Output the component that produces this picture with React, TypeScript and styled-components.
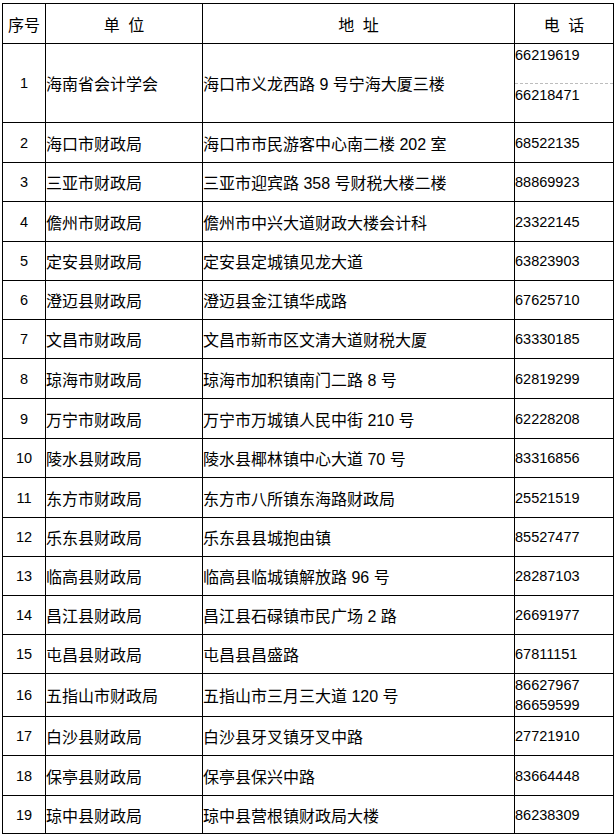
import styled, { createGlobalStyle } from "styled-components";

const GlobalStyle = createGlobalStyle`
    html, body {
        margin: 0;
        padding: 0;
        background: #ffffff;
    }
    body {
        font-family: "Liberation Sans", "Noto Sans CJK SC", sans-serif;
        color: #000000;
    }
`;

interface RowData {
    no: number;
    unit: string;
    address: string;
    phones: string[];
    h: number;
    split?: boolean;
}

const rows: RowData[] = [
    { no: 1, unit: "海南省会计学会", address: "海口市义龙西路 9 号宁海大厦三楼", phones: ["66219619", "66218471"], h: 79, split: true },
    { no: 2, unit: "海口市财政局", address: "海口市市民游客中心南二楼 202 室", phones: ["68522135"], h: 40 },
    { no: 3, unit: "三亚市财政局", address: "三亚市迎宾路 358 号财税大楼二楼", phones: ["88869923"], h: 39 },
    { no: 4, unit: "儋州市财政局", address: "儋州市中兴大道财政大楼会计科", phones: ["23322145"], h: 40 },
    { no: 5, unit: "定安县财政局", address: "定安县定城镇见龙大道", phones: ["63823903"], h: 39 },
    { no: 6, unit: "澄迈县财政局", address: "澄迈县金江镇华成路", phones: ["67625710"], h: 39 },
    { no: 7, unit: "文昌市财政局", address: "文昌市新市区文清大道财税大厦", phones: ["63330185"], h: 39 },
    { no: 8, unit: "琼海市财政局", address: "琼海市加积镇南门二路 8 号", phones: ["62819299"], h: 40 },
    { no: 9, unit: "万宁市财政局", address: "万宁市万城镇人民中街 210 号", phones: ["62228208"], h: 40 },
    { no: 10, unit: "陵水县财政局", address: "陵水县椰林镇中心大道 70 号", phones: ["83316856"], h: 39 },
    { no: 11, unit: "东方市财政局", address: "东方市八所镇东海路财政局", phones: ["25521519"], h: 40 },
    { no: 12, unit: "乐东县财政局", address: "乐东县县城抱由镇", phones: ["85527477"], h: 39 },
    { no: 13, unit: "临高县财政局", address: "临高县临城镇解放路 96 号", phones: ["28287103"], h: 39 },
    { no: 14, unit: "昌江县财政局", address: "昌江县石碌镇市民广场 2 路", phones: ["26691977"], h: 39 },
    { no: 15, unit: "屯昌县财政局", address: "屯昌县昌盛路", phones: ["67811151"], h: 39 },
    { no: 16, unit: "五指山市财政局", address: "五指山市三月三大道 120 号", phones: ["86627967", "86659599"], h: 43 },
    { no: 17, unit: "白沙县财政局", address: "白沙县牙叉镇牙叉中路", phones: ["27721910"], h: 39 },
    { no: 18, unit: "保亭县财政局", address: "保亭县保兴中路", phones: ["83664448"], h: 40 },
    { no: 19, unit: "琼中县财政局", address: "琼中县营根镇财政局大楼", phones: ["86238309"], h: 38 },
];

const StyledTable = styled.div`
    margin: 3px 0 0 2px;
    width: 612px;
    border-top: 1px solid #000;
    border-left: 1px solid #000;
    box-sizing: border-box;
`;

const StyledRow = styled.div<{ $h: number }>`
    display: grid;
    grid-template-columns: 43px 157px 312px 99px;
    height: ${p => p.$h}px;
`;

const StyledCell = styled.div<{ $center?: boolean; $num?: boolean }>`
    display: flex;
    align-items: center;
    justify-content: ${p => (p.$center ? "center" : "flex-start")};
    border-right: 1px solid #000;
    border-bottom: 1px solid #000;
    box-sizing: border-box;
    font-size: ${p => (p.$num ? "14.5px" : "16px")};
    white-space: nowrap;
    overflow: hidden;
`;

const StyledHeadText = styled.span`
    font-size: 16px;
    word-spacing: 4px;
`;

const StyledPhoneCell = styled.div`
    display: flex;
    flex-direction: column;
    justify-content: center;
    border-right: 1px solid #000;
    border-bottom: 1px solid #000;
    box-sizing: border-box;
    font-size: 14.5px;
    line-height: 20px;
    white-space: nowrap;
`;

const StyledSplitPart = styled.div<{ $dashed?: boolean }>`
    flex: 1;
    padding-top: ${p => (p.$dashed ? "1px" : "1px")};
    border-top: ${p => (p.$dashed ? "1px dashed #bdbdbd" : "none")};
`;

export default function App() {
    const renderPhones = (row: RowData) => {
        if (row.split) {
            return (
                <StyledPhoneCell>
                    <StyledSplitPart>{row.phones[0]}</StyledSplitPart>
                    <StyledSplitPart $dashed>{row.phones[1]}</StyledSplitPart>
                </StyledPhoneCell>
            );
        }
        return (
            <StyledPhoneCell>
                {row.phones.map(p => (
                    <div key={p}>{p}</div>
                ))}
            </StyledPhoneCell>
        );
    };

    return (
        <>
            <GlobalStyle />
            <StyledTable>
                <StyledRow $h={40}>
                    <StyledCell $center><StyledHeadText>序号</StyledHeadText></StyledCell>
                    <StyledCell $center><StyledHeadText>单 位</StyledHeadText></StyledCell>
                    <StyledCell $center><StyledHeadText>地 址</StyledHeadText></StyledCell>
                    <StyledCell $center><StyledHeadText>电 话</StyledHeadText></StyledCell>
                </StyledRow>
                {rows.map(row => (
                    <StyledRow key={row.no} $h={row.h}>
                        <StyledCell $center $num>{row.no}</StyledCell>
                        <StyledCell>{row.unit}</StyledCell>
                        <StyledCell>{row.address}</StyledCell>
                        {renderPhones(row)}
                    </StyledRow>
                ))}
            </StyledTable>
        </>
    );
}
